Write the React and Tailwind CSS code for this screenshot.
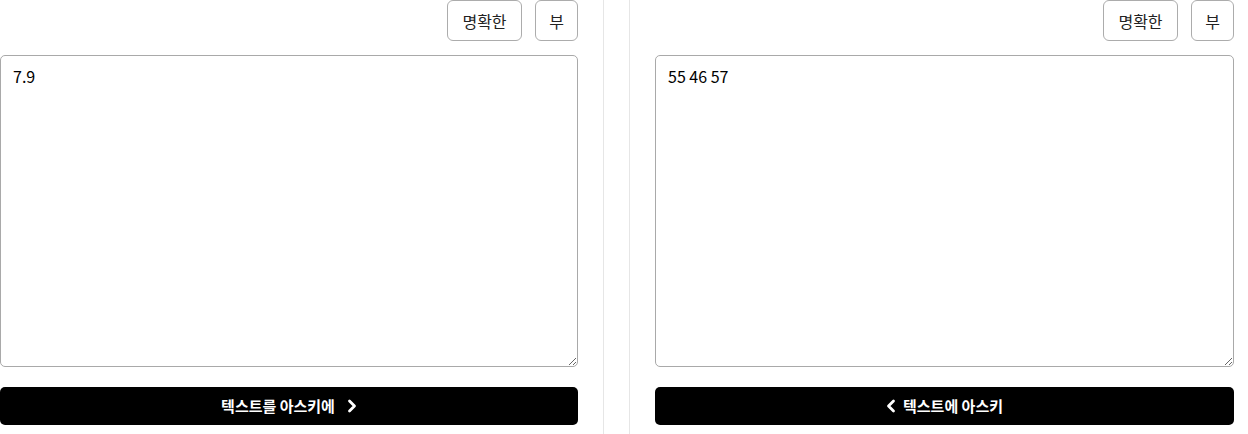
const font = { fontFamily: '"Noto Sans CJK KR", "Noto Sans", sans-serif' };

function Chevron({ left, className }) {
  return (
    <svg viewBox="0 0 10 14" className={className} fill="none" stroke="currentColor" strokeWidth="2.8" strokeLinecap="round" strokeLinejoin="round">
      {left ? <polyline points="7.5,2 2.5,7 7.5,12" /> : <polyline points="2.5,2 7.5,7 2.5,12" />}
    </svg>
  );
}

function Panel({ value, label, dir, width }) {
  return (
    <div className={`flex flex-col shrink-0 ${width}`}>
      <div className="flex justify-end gap-[13px] h-[42px]">
        <button className="w-[75px] h-[41px] border border-[#acacac] rounded-[6px] bg-white text-[16px] text-[#222]">
          명확한
        </button>
        <button className="w-[43px] h-[41px] border border-[#acacac] rounded-[6px] bg-white text-[16px] text-[#222]">
          부
        </button>
      </div>
      <textarea
        defaultValue={value}
        className="mt-[13px] h-[312px] w-full border border-[#a9a9a9] rounded-[5px] px-3 py-[8px] text-[16px] leading-6 text-black outline-none resize-y"
        style={font}
      />
      <button className="mt-[20px] h-[38px] w-full bg-black rounded-[5px] text-white text-[15px] font-bold flex items-center justify-center">
        {dir === "left" && <Chevron left className="w-[10px] h-[14px] mr-[7px]" />}
        <span>{label}</span>
        {dir === "right" && <Chevron className="w-[10px] h-[14px] ml-[12px]" />}
      </button>
    </div>
  );
}

export default function App() {
  return (
    <div className="flex h-[434px] bg-white overflow-hidden" style={font}>
      <div className="pr-[25px] border-r border-[#e6e6e6] h-full">
        <Panel value="7.9" label="텍스트를 아스키에" dir="right" width="w-[578px]" />
      </div>
      <div className="ml-[25px] pl-[25px] border-l border-[#e6e6e6] h-full">
        <Panel value="55 46 57" label="텍스트에 아스키" dir="left" width="w-[579px]" />
      </div>
    </div>
  );
}
